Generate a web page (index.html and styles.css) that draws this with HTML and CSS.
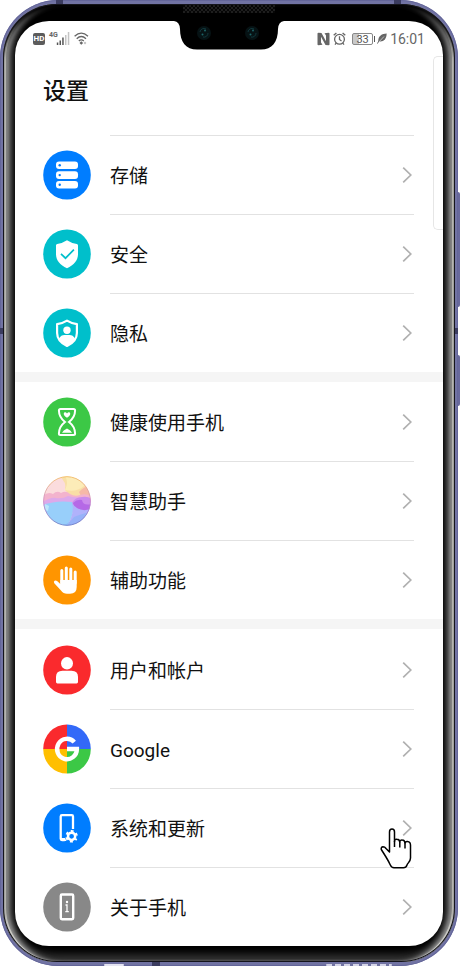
FILE: index.html
```html
<!DOCTYPE html>
<html lang="zh-CN">
<head>
<meta charset="utf-8">
<meta name="viewport" content="width=device-width, initial-scale=1">
<title>设置</title>
<link rel="stylesheet" href="styles.css">
</head>
<body>
<svg class="defs" width="0" height="0" aria-hidden="true">
  <symbol id="chevron" viewBox="0 0 10 16"><path d="M1.2 .6 8.800 8 1.2 15.400" fill="none" stroke="#b0b0b0" stroke-width="1.700"/></symbol>
</svg>
<div class="phone">
  <span class="key key-volume"></span>
  <span class="key key-power"></span>
  <div class="shell">
    <span class="band band-top-left"></span>
    <span class="band band-top-right"></span>
    <span class="band band-left"></span>
    <span class="band band-right"></span>
    <span class="band band-bottom"></span>
    <span class="port port-left"></span>
    <span class="port port-right"></span>
    <div class="bezel">
      <span class="speaker"></span>
      <div class="screen">
        <svg class="notch" width="110" height="29" viewBox="0 0 110 29" aria-hidden="true">
          <path d="M0 0H110Q104.500 .5 104 8C104 21 98 28.500 87 28.500H23C12 28.500 6 21 6 8Q5.500 .5 0 0Z" fill="#000"/>
          <g fill="#061214"><circle cx="30" cy="12" r="7"/><circle cx="78" cy="12" r="7"/></g>
          <g fill="none" stroke="#12383c" stroke-width="1"><path d="M26 11a4 4 0 0 1 6-3M34 12a4 4 0 0 1-5 4M74 11a4 4 0 0 1 6-3M82 12a4 4 0 0 1-5 4"/></g>
          <g fill="#1d6468"><circle cx="31" cy="9.500" r="1"/><circle cx="28.500" cy="13.500" r="1"/><circle cx="79" cy="9.500" r="1"/><circle cx="76.500" cy="13.500" r="1"/></g>
        </svg>
        <header class="status">
          <span class="hd">HD</span>
          <span class="net">4G</span>
          <svg class="signal" width="14" height="13" viewBox="0 0 14 13" aria-hidden="true">
            <path d="M.8 10.500h1.500V13H.8zM3.500 8.500H5V13H3.500zM6.200 5.500h1.500V13H6.200z" fill="#555"/>
            <path d="M9 3h1.500v10H9zM11.800 0h1.500v13h-1.500z" fill="#c4c4c4"/>
          </svg>
          <svg class="wifi" width="15" height="13" viewBox="0 0 15 13" aria-hidden="true">
            <g fill="none" stroke="#666" stroke-width="1.300"><path d="M.6 4.300Q7.300-2 14 4.300M2.700 6.700Q7.300 2.400 12 6.700M4.800 9Q7.300 6.700 9.800 9"/></g>
            <path d="m7.300 9.300 1.800 1.700-1.800 1.700L5.500 11z" fill="#666"/><path d="m9.700 11 1.300-1.500L12.300 11 11 12.500z" fill="#bbb"/>
          </svg>
          <span class="gap"></span>
          <svg class="nfc" width="13" height="14" viewBox="0 0 13 14" aria-hidden="true">
            <path d="M.5 1.500Q.5.700 1.500.700L4.500 1 9 9.200V3.500L7.500 1.200 11.500.700Q12.500.700 12.500 1.500v11q0 .8-1 .8L8.500 13 4 4.800v5.700L5.500 12.800l-4 .5q-1 0-1-.8z" fill="#666"/>
          </svg>
          <svg class="alarm" width="13" height="14" viewBox="0 0 13 14" aria-hidden="true">
            <g fill="none" stroke="#666" stroke-width="1.300"><circle cx="6.500" cy="7.300" r="4.900"/><path d="M.7 3.300 3.400.900M12.300 3.300 9.600.900M6.500 4.300v3.200l2 1.500M3.200 11 2 12.700M9.800 11l1.200 1.700"/></g>
          </svg>
          <span class="battery">33</span>
          <svg class="leaf" width="10" height="11" viewBox="0 0 10 11" aria-hidden="true">
            <path d="M9.700.5C5 .7 1 2.800 1.300 8.200 6 9.500 9.500 6.500 9.700.5Z" fill="#666"/><path d="M.4 10.500 7 3.500" stroke="#fff" stroke-width=".6"/><path d="m.4 10.600 1.700-3" stroke="#666"/>
          </svg>
          <time class="clock">16:01</time>
        </header>
        <span class="edge-panel"></span>
        <main>
          <h1>设置</h1>
          <ul class="group group-lined">
            <li><a href="#storage" class="row">
              <svg class="icon" viewBox="0 0 48 50" aria-hidden="true"><ellipse cx="24" cy="25" rx="23.800" ry="24.600" fill="#007dff"/><g fill="#fff"><rect x="13" y="11.500" width="22" height="7.600" rx="3"/><rect x="13" y="21.300" width="22" height="7.600" rx="3"/><rect x="13" y="31" width="22" height="7.600" rx="3"/></g><g fill="#007dff"><circle cx="16.700" cy="15.300" r="1.200"/><circle cx="16.700" cy="25.100" r="1.200"/><circle cx="16.700" cy="34.800" r="1.200"/></g></svg>
              <span class="line"><span class="label">存储</span><svg class="chevron"><use href="#chevron"/></svg></span></a></li>
            <li><a href="#security" class="row">
              <svg class="icon" viewBox="0 0 48 50" aria-hidden="true"><ellipse cx="24" cy="25" rx="23.800" ry="24.600" fill="#00bfcb"/><path d="M24 11.300Q28.500 14.300 33.800 15q1.200.2 1.200 1.400V25c0 6.500-4 11-11 14.200C17 36 13 31.500 13 25v-8.600q0-1.200 1.200-1.400Q19.500 14.300 24 11.300Z" fill="#fff"/><path d="m18 24.800 4.500 4.400 8.400-8.600" fill="none" stroke="#00bfcb" stroke-width="1.700"/></svg>
              <span class="line"><span class="label">安全</span><svg class="chevron"><use href="#chevron"/></svg></span></a></li>
            <li><a href="#privacy" class="row">
              <svg class="icon" viewBox="0 0 48 50" aria-hidden="true"><ellipse cx="24" cy="25" rx="23.800" ry="24.600" fill="#00bfcb"/><path d="M24 12.600q4.700 2.900 9.900 3.600V25c0 6-3.600 10-9.900 13-6.300-3-9.900-7-9.900-13v-8.800q5.200-.7 9.900-3.600Z" fill="none" stroke="#fff" stroke-width="2.200" stroke-linejoin="round"/><circle cx="24" cy="22.200" r="3.700" fill="#fff"/><path d="M16 30.500q2-3.400 5.500-3.400h5q3.500 0 5.500 3.400-2.400 4.400-8 7-5.600-2.600-8-7Z" fill="#fff"/></svg>
              <span class="line"><span class="label">隐私</span><svg class="chevron"><use href="#chevron"/></svg></span></a></li>
          </ul>
          <ul class="group">
            <li><a href="#balance" class="row">
              <svg class="icon" viewBox="0 0 48 50" aria-hidden="true"><ellipse cx="24" cy="25" rx="23.800" ry="24.600" fill="#3cc846"/><path d="M17.500 12h13q1.600 0 1.600 1.500C32 19.500 29.500 22.300 26 25c3.500 2.700 6 5.500 6.100 11.500q0 1.500-1.600 1.500h-13q-1.600 0-1.600-1.500C16 30.500 18.500 27.700 22 25c-3.500-2.700-6-5.500-6.100-11.500q0-1.500 1.600-1.500Z" fill="none" stroke="#fff" stroke-width="2"/><path d="M24 20.800c-5-3.300-3.200-6-1.500-5.600q1 .2 1.500 1.200.5-1 1.500-1.200c1.700-.4 3.500 2.300-1.500 5.600ZM19 35.700q1-2.500 5-4.200 4 1.700 5 4.200Z" fill="#fff"/></svg>
              <span class="line"><span class="label">健康使用手机</span><svg class="chevron"><use href="#chevron"/></svg></span></a></li>
            <li><a href="#assistant" class="row">
              <svg class="icon" viewBox="0 0 48 50" aria-hidden="true">
                <clipPath id="orb"><ellipse cx="24" cy="25" rx="23.500" ry="24.400"/></clipPath>
                <g clip-path="url(#orb)"><path fill="#fbdcdd" d="M0 0h48v50H0z"/><path fill="#f9dfa6" d="M16 0h32v20H38Q28 22 22 14 24 6 16 0Z"/><path fill="#fcecb8" d="M22 0h14q6 4 6 9-8 8-20 5Q26 6 22 0Z"/><path fill="#f6b9a7" d="M36 16q4-5 12-7v16q-9 0-12-9Z"/><path fill="#f3b3cd" d="M0 20q5-5 10-2 4-4 8-1 5-3 9 1 5 3 10 1t11 1v14H0z"/><path fill="#dda9ea" d="M0 26q8-5 13-4 7 1 12-2 8 2 23 2v14H0z"/><path fill="#cb8cec" d="M29 27q3-6 10-6 6-1 9 2v17H31z"/><path fill="#b569e6" d="M30 27q4-4 9-3 1 6 9 4v7q-10 3-16-1z"/><path fill="#98cffa" d="M0 29Q13 24 29 26q4 10-5 24H0z"/><path fill="#b0b2fb" d="M29 27q3 10-5 23h24V33q-12 4-19-6Z"/><path fill="#86b2f6" d="M18 50q8-2 13-9 6-3 17-5l-6 14z" opacity=".6"/><path fill="#bce7fb" d="M2 28l4 2-1 5-4-2z"/></g>
                <ellipse cx="24" cy="25" rx="23.400" ry="24.300" fill="none" stroke="url(#rim)" stroke-width=".8"/>
                <linearGradient id="rim" x2="0" y2="1"><stop stop-color="#f2b95f"/><stop offset=".5" stop-color="#c98aca"/><stop offset="1" stop-color="#667ac5"/></linearGradient>
              </svg>
              <span class="line"><span class="label">智慧助手</span><svg class="chevron"><use href="#chevron"/></svg></span></a></li>
            <li><a href="#accessibility" class="row">
              <svg class="icon" viewBox="0 0 48 50" aria-hidden="true"><ellipse cx="24" cy="25" rx="23.800" ry="24.600" fill="#ff9500"/><path d="M18.800 28V15.500M23.300 28V13M27.800 28V14M32.200 28V17" stroke="#fff" stroke-width="3" stroke-linecap="round"/><path d="M17.300 25H33.700v7q0 6.800-6.700 6.800h-3q-3.600 0-6-3.200L11.300 28.200q-1-1.700.3-2.500 1.200-.7 2.500.4l3.200 2.900Z" fill="#fff"/></svg>
              <span class="line"><span class="label">辅助功能</span><svg class="chevron"><use href="#chevron"/></svg></span></a></li>
          </ul>
          <ul class="group">
            <li><a href="#accounts" class="row">
              <svg class="icon" viewBox="0 0 48 50" aria-hidden="true"><ellipse cx="24" cy="25" rx="23.800" ry="24.600" fill="#fa2a2d"/><ellipse cx="24" cy="18.300" rx="6" ry="6.200" fill="#fff"/><path d="M13 37v-5q0-6.200 6.500-6.200h9Q35 25.800 35 32v5q0 1.400-1.400 1.400H14.400Q13 38.400 13 37Z" fill="#fff"/></svg>
              <span class="line"><span class="label">用户和帐户</span><svg class="chevron"><use href="#chevron"/></svg></span></a></li>
            <li><a href="#google" class="row">
              <svg class="icon" viewBox="0 0 48 50" aria-hidden="true"><clipPath id="disc"><ellipse cx="24" cy="25" rx="23.800" ry="24.600"/></clipPath><g clip-path="url(#disc)"><path fill="#fa2a2d" d="M0 0h24v25H0z"/><path fill="#3369f8" d="M24 0h24v25H24z"/><path fill="#ffbf00" d="M0 25h24v25H0z"/><path fill="#3cc846" d="M24 25h24v25H24z"/></g><path d="M31.300 18.100A9.900 10.200 0 1 0 33.900 25H24" fill="none" stroke="#fff" stroke-width="4.400"/></svg>
              <span class="line"><span class="label">Google</span><svg class="chevron"><use href="#chevron"/></svg></span></a></li>
            <li class="pointed"><a href="#system" class="row">
              <svg class="icon" viewBox="0 0 48 50" aria-hidden="true"><ellipse cx="24" cy="25" rx="23.800" ry="24.600" fill="#007dff"/><path d="M30 26V13.500q0-1.300-1.300-1.300H19q-1.300 0-1.300 1.300v22.200q0 1.300 1.300 1.300h2.700" fill="none" stroke="#fff" stroke-width="2.300"/><path d="M18 35h4l1.500 3.100H18z" fill="#fff"/><circle cx="28.600" cy="33.300" r="3.600" fill="none" stroke="#fff" stroke-width="2.500"/><circle cx="28.600" cy="33.300" r="5.200" fill="none" stroke="#fff" stroke-width="2.200" stroke-dasharray="2.700 2.745" stroke-dashoffset="1.350" transform="rotate(30 28.600 33.300)"/></svg>
              <span class="line"><span class="label">系统和更新</span><svg class="chevron"><use href="#chevron"/></svg></span></a>
              <svg class="pointer" width="32" height="41" viewBox="0 0 32 41" aria-hidden="true"><path d="M9.500 24V4q0-3 2.500-3t2.500 3v9.500q0-2.500 2.500-2.300 2.800 0 2.800 3.300 0-2.700 2.600-2.400 2.600.2 2.600 3.400.2-2.200 2.500-2 3 .2 3 3.800V30c0 3.500-2.800 5-3.500 7q-.9 2.700-3.500 2.700H14q-2.600 0-3.800-3Q9 34 6 29L1.300 21.500Q.8 19 3 18.800q1.800 0 3 1.700Z" fill="#fff" stroke="#000" stroke-width="1.500" stroke-linejoin="round"/><path d="M14.500 13v6M19.800 14.500V19.500M25 15.500V20.500" stroke="#000" stroke-width="1.500"/></svg></li>
            <li><a href="#about" class="row">
              <svg class="icon" viewBox="0 0 48 50" aria-hidden="true"><ellipse cx="24" cy="25" rx="23.800" ry="24.600" fill="#888"/><rect x="17.800" y="12.500" width="12.400" height="24.800" rx="1.200" fill="none" stroke="#fff" stroke-width="2.400"/><circle cx="24" cy="20" r="1.200" fill="#fff"/><path d="M22.500 23H24v6.300M22.300 29.600h3.500" fill="none" stroke="#fff" stroke-width="1.300"/></svg>
              <span class="line"><span class="label">关于手机</span><svg class="chevron"><use href="#chevron"/></svg></span></a></li>
          </ul>
        </main>
      </div>
    </div>
  </div>
</div>
</body>
</html>
```
FILE: styles.css
```css
* { box-sizing: border-box; }

body {
  margin: 0;
  background: #fff;
  color: #111;
  font-family: Roboto, "Noto Sans CJK SC", sans-serif;
}

.defs { position: absolute; }

/* Phone body */
.phone {
  position: relative;
  padding-right: 2px;
}

.shell {
  position: relative;
  padding: 4px 3px;
  border-radius: 58px;
  background: #7173a3;
  box-shadow: inset 0 0 0 1px #64669a;
  overflow: hidden;
}

.bezel {
  position: relative;
  padding: 17px 12px 16px;
  border-radius: 54px;
  background: #000;
  box-shadow:
    inset 0 0 0 1px #15151c,
    inset 0 5px 4px #000,
    inset 3px 0 1px #d6d6d0,
    inset -3px 0 1px #d6d6d0,
    inset 6px 0 3px #858585,
    inset -6px 0 3px #858585,
    inset 10px 0 4px #484848,
    inset -10px 0 4px #484848,
    inset 0 -8px 7px #303030;
}

.screen {
  position: relative;
  border-radius: 34px;
  background: #fff;
  overflow: hidden;
}

.key {
  position: absolute;
  right: 0;
  width: 4px;
  border-radius: 0 2px 2px 0;
  background: #696a9d;
}
.key-volume { top: 192px; height: 115px; }
.key-power { top: 355px; height: 51px; }

.band { position: absolute; background: #3b3c60; }
.band-top-left { top: 0; left: 56px; width: 7px; height: 4px; }
.band-top-right { top: 0; right: 57px; width: 7px; height: 4px; }
.band-left { top: 328px; left: 0; width: 3px; height: 6px; }
.band-right { top: 328px; right: 0; width: 3px; height: 6px; }
.band-bottom { bottom: 0; left: 152px; width: 8px; height: 4px; }

.port {
  position: absolute;
  bottom: 0;
  height: 2px;
  border-radius: 2px;
  background: #e4e4f2;
}
.port-left { left: 104px; width: 20px; }
.port-right { right: 66px; width: 66px; background: repeating-linear-gradient(90deg, #d5d5e8 0 6px, #7173a3 6px 9px); }

.speaker {
  position: absolute;
  top: 1px;
  left: 50%;
  width: 92px;
  height: 8px;
  margin-left: -46px;
  background: repeating-conic-gradient(#1e1e1e 0 25%, #060606 0 50%) 0 0 / 4px 4px;
}

.notch {
  position: absolute;
  top: 0;
  left: 50%;
  margin-left: -55px;
}

/* Status bar */
.status {
  display: flex;
  align-items: center;
  height: 35px;
  padding: 0 18px;
  color: #666;
}
.gap { flex: 1; }

.hd {
  width: 12px;
  height: 12px;
  border-radius: 2px;
  background: #5c5c5c;
  color: #fff;
  font-size: 8px;
  font-weight: 700;
  line-height: 12px;
  text-align: center;
}
.net {
  align-self: flex-start;
  margin: 9px 0 0 4px;
  width: 7px;
  font-size: 7px;
  font-weight: 700;
  line-height: 10px;
}
.wifi { margin-left: 4px; }
.alarm { margin-left: 3px; }
.battery {
  position: relative;
  width: 21px;
  height: 12px;
  margin: 0 4px 0 6px;
  border: 1px solid #888;
  border-radius: 2px;
  background: linear-gradient(90deg, #c9c9c9 33%, #fff 33%);
  color: #555;
  font-size: 11px;
  line-height: 11px;
  text-align: center;
}
.battery::after {
  content: "";
  position: absolute;
  top: 2px;
  right: -3px;
  width: 1px;
  height: 6px;
  background: #555;
}
.clock {
  margin-left: 3px;
  font-size: 14px;
  line-height: 16px;
}

.edge-panel {
  position: absolute;
  top: 35px;
  right: 0;
  width: 10px;
  height: 174px;
  border: 1px solid #e6e6e6;
  border-right: 0;
  border-radius: 5px 0 0 5px;
}

/* Settings list */
h1 {
  margin: 0 28px 7px;
  font-size: 23px;
  font-weight: 500;
  line-height: 72px;
}

.group {
  margin: 0;
  padding: 0;
  list-style: none;
}
.group + .group { border-top: 10px solid #f5f5f5; }
.group:last-child { padding-top: 1px; }

.row {
  display: flex;
  align-items: center;
  gap: 19px;
  padding: 0 29px 0 28px;
  color: inherit;
  text-decoration: none;
}
.icon {
  flex: none;
  width: 48px;
  height: 50px;
}
.line {
  flex: 1;
  display: flex;
  align-items: center;
  justify-content: space-between;
  height: 79px;
  padding-right: 2px;
  border-top: 1px solid #e2e2e2;
  font-size: 19px;
  line-height: 28px;
}
.label { padding-top: 3px; }
.group:not(.group-lined) > li:first-child .line { border-top-color: transparent; }
.chevron { width: 10px; height: 16px; }

.pointed { position: relative; }
.pointer {
  position: absolute;
  top: 40px;
  right: 31px;
}
```
